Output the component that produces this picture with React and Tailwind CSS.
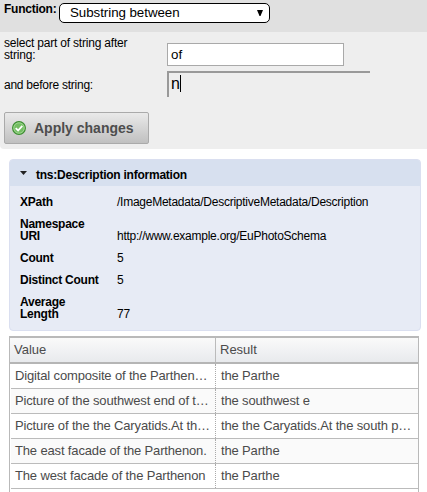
const info = [
  { label: 'XPath', value: '/ImageMetadata/DescriptiveMetadata/Description', height: 'h-[22px]' },
  { label: 'Namespace URI', value: 'http://www.example.org/EuPhotoSchema', height: 'h-[34px]' },
  { label: 'Count', value: '5', height: 'h-[22px]' },
  { label: 'Distinct Count', value: '5', height: 'h-[22px]' },
  { label: 'Average Length', value: '77', height: 'h-[34px]' },
];

const rows = [
  ['Digital composite of the Parthen…', 'the Parthe'],
  ['Picture of the southwest end of t…', 'the southwest e'],
  ['Picture of the the Caryatids.At th…', 'the the Caryatids.At the south p…'],
  ['The east facade of the Parthenon.', 'the Parthe'],
  ['The west facade of the Parthenon', 'the Parthe'],
];

function FunctionForm() {
  return (
    <section className="h-[149px] rounded-bl-[4px] bg-[#eeeeee]">
      <div className="flex h-8 items-start bg-[#e0e0e0] pl-1 pt-[3px]">
        <span className="w-[55px] text-[12px] font-bold leading-[12px] tracking-[-0.25px]">Function:</span>
        <div className="flex h-5 w-[211px] items-center justify-between rounded-[5px] border border-black bg-white pl-[10px] pr-[6px]">
          <span className="text-[13.33px] leading-5 tracking-[-0.05px]">Substring between</span>
          <svg width="6" height="6" viewBox="0 0 6 6" className="mb-px">
            <path d="M0 0H6L3.5 6h-1z" />
          </svg>
        </div>
      </div>
      <div className="flex h-[39px] pl-1 pt-[5px]">
        <label className="w-[163px] pr-8 text-[12px] leading-[12px] tracking-[-0.2px]">select part of string after string:</label>
        <div className="mt-[6px] h-[23px] w-[177px] border border-[#a9a9a9] bg-white pl-[3px] text-[13.33px] leading-[22px]">of</div>
      </div>
      <div className="flex h-[41px] pl-1">
        <label className="w-[163px] pt-[8px] text-[12px] leading-[12px] tracking-[-0.25px]">and before string:</label>
        <div className="flex h-[26px] w-[203px] border-l-2 border-t-2 border-[#999999] pl-[2px] pt-[2px]">
          <span className="w-[9px] text-[16px] leading-[18px]">n</span>
          <span className="h-[17px] w-px bg-black" />
        </div>
      </div>
      <button className="ml-1 flex h-8 w-[145px] items-center rounded-[2px] border border-[#aaaaaa] bg-linear-to-b from-[#eaeaea] to-[#c0c0c0] pl-[7px] text-[#4d4d4d]">
        <svg width="14" height="14" viewBox="0 0 14 14">
          <circle cx="7" cy="7" r="6.4" fill="#74bd63" stroke="#3c8c31" strokeWidth="1.1" />
          <circle cx="7" cy="7" r="5.2" fill="none" stroke="#a6dc99" strokeWidth=".8" />
          <path d="M3.7 7.1l2.4 2.4 4.2-4.7" fill="none" stroke="#ffffff" strokeWidth="1.8" />
        </svg>
        <span className="ml-[8px] text-[14px] font-bold">Apply changes</span>
      </button>
    </section>
  );
}

function InfoPanel() {
  return (
    <section className="ml-[9px] mt-[10px] h-[172px] w-[412px] overflow-hidden rounded-[4px] border border-[#dadff0] bg-[#e7ebf5]">
      <header className="flex h-[26px] items-center bg-[#d7e0ef] pl-[10px]">
        <svg width="7" height="4" viewBox="0 0 7 4" className="mb-px">
          <path d="M0 0h7L3.5 4z" fill="#222222" />
        </svg>
        <h2 className="ml-[9px] mt-[3px] text-[12px] font-bold leading-[14px] tracking-[-0.24px]">tns:Description information</h2>
      </header>
      <dl className="pl-[10px] pt-[5px] text-[12px] leading-[12px] tracking-[-0.25px]">
        {info.map(({ label, value, height }) => (
          <div key={label} className={`flex items-end pb-[5px] ${height}`}>
            <dt className="w-[97px] pr-[16px] font-bold">{label}</dt>
            <dd>{value}</dd>
          </div>
        ))}
      </dl>
    </section>
  );
}

function ResultTable() {
  return (
    <section className="ml-[9px] mt-[5px] h-[160px] w-[410px] overflow-hidden border border-b-0 border-[#b9b9b9] text-[13px] text-[#4b4b4b]">
      <div className="flex h-[27px] border-b-2 border-t border-b-[#b5b5b5] border-t-[#b9b9b9] bg-linear-to-b from-[#fafafa] to-[#e8eaed] leading-[23px]">
        <div className="w-[206px] border-r border-[#bbbbbb] pl-1">Value</div>
        <div className="pl-1">Result</div>
      </div>
      {rows.map(([value, result], i) => (
        <div key={value} className="ml-px flex h-[25px] whitespace-nowrap border-b border-[#bbbbbb] leading-[23px] tracking-[-0.15px] even:bg-white odd:bg-[#fafafa]">
          <div className="w-[205px] border-r border-dotted border-[#aaaaaa] pl-[4px]">{value}</div>
          <div className="pl-[5px]">{result}</div>
        </div>
      ))}
    </section>
  );
}

export default function App() {
  return (
    <main className="h-[492px] w-[427px] overflow-hidden bg-white font-['Liberation_Sans',Arial,sans-serif] text-black">
      <FunctionForm />
      <InfoPanel />
      <ResultTable />
    </main>
  );
}
